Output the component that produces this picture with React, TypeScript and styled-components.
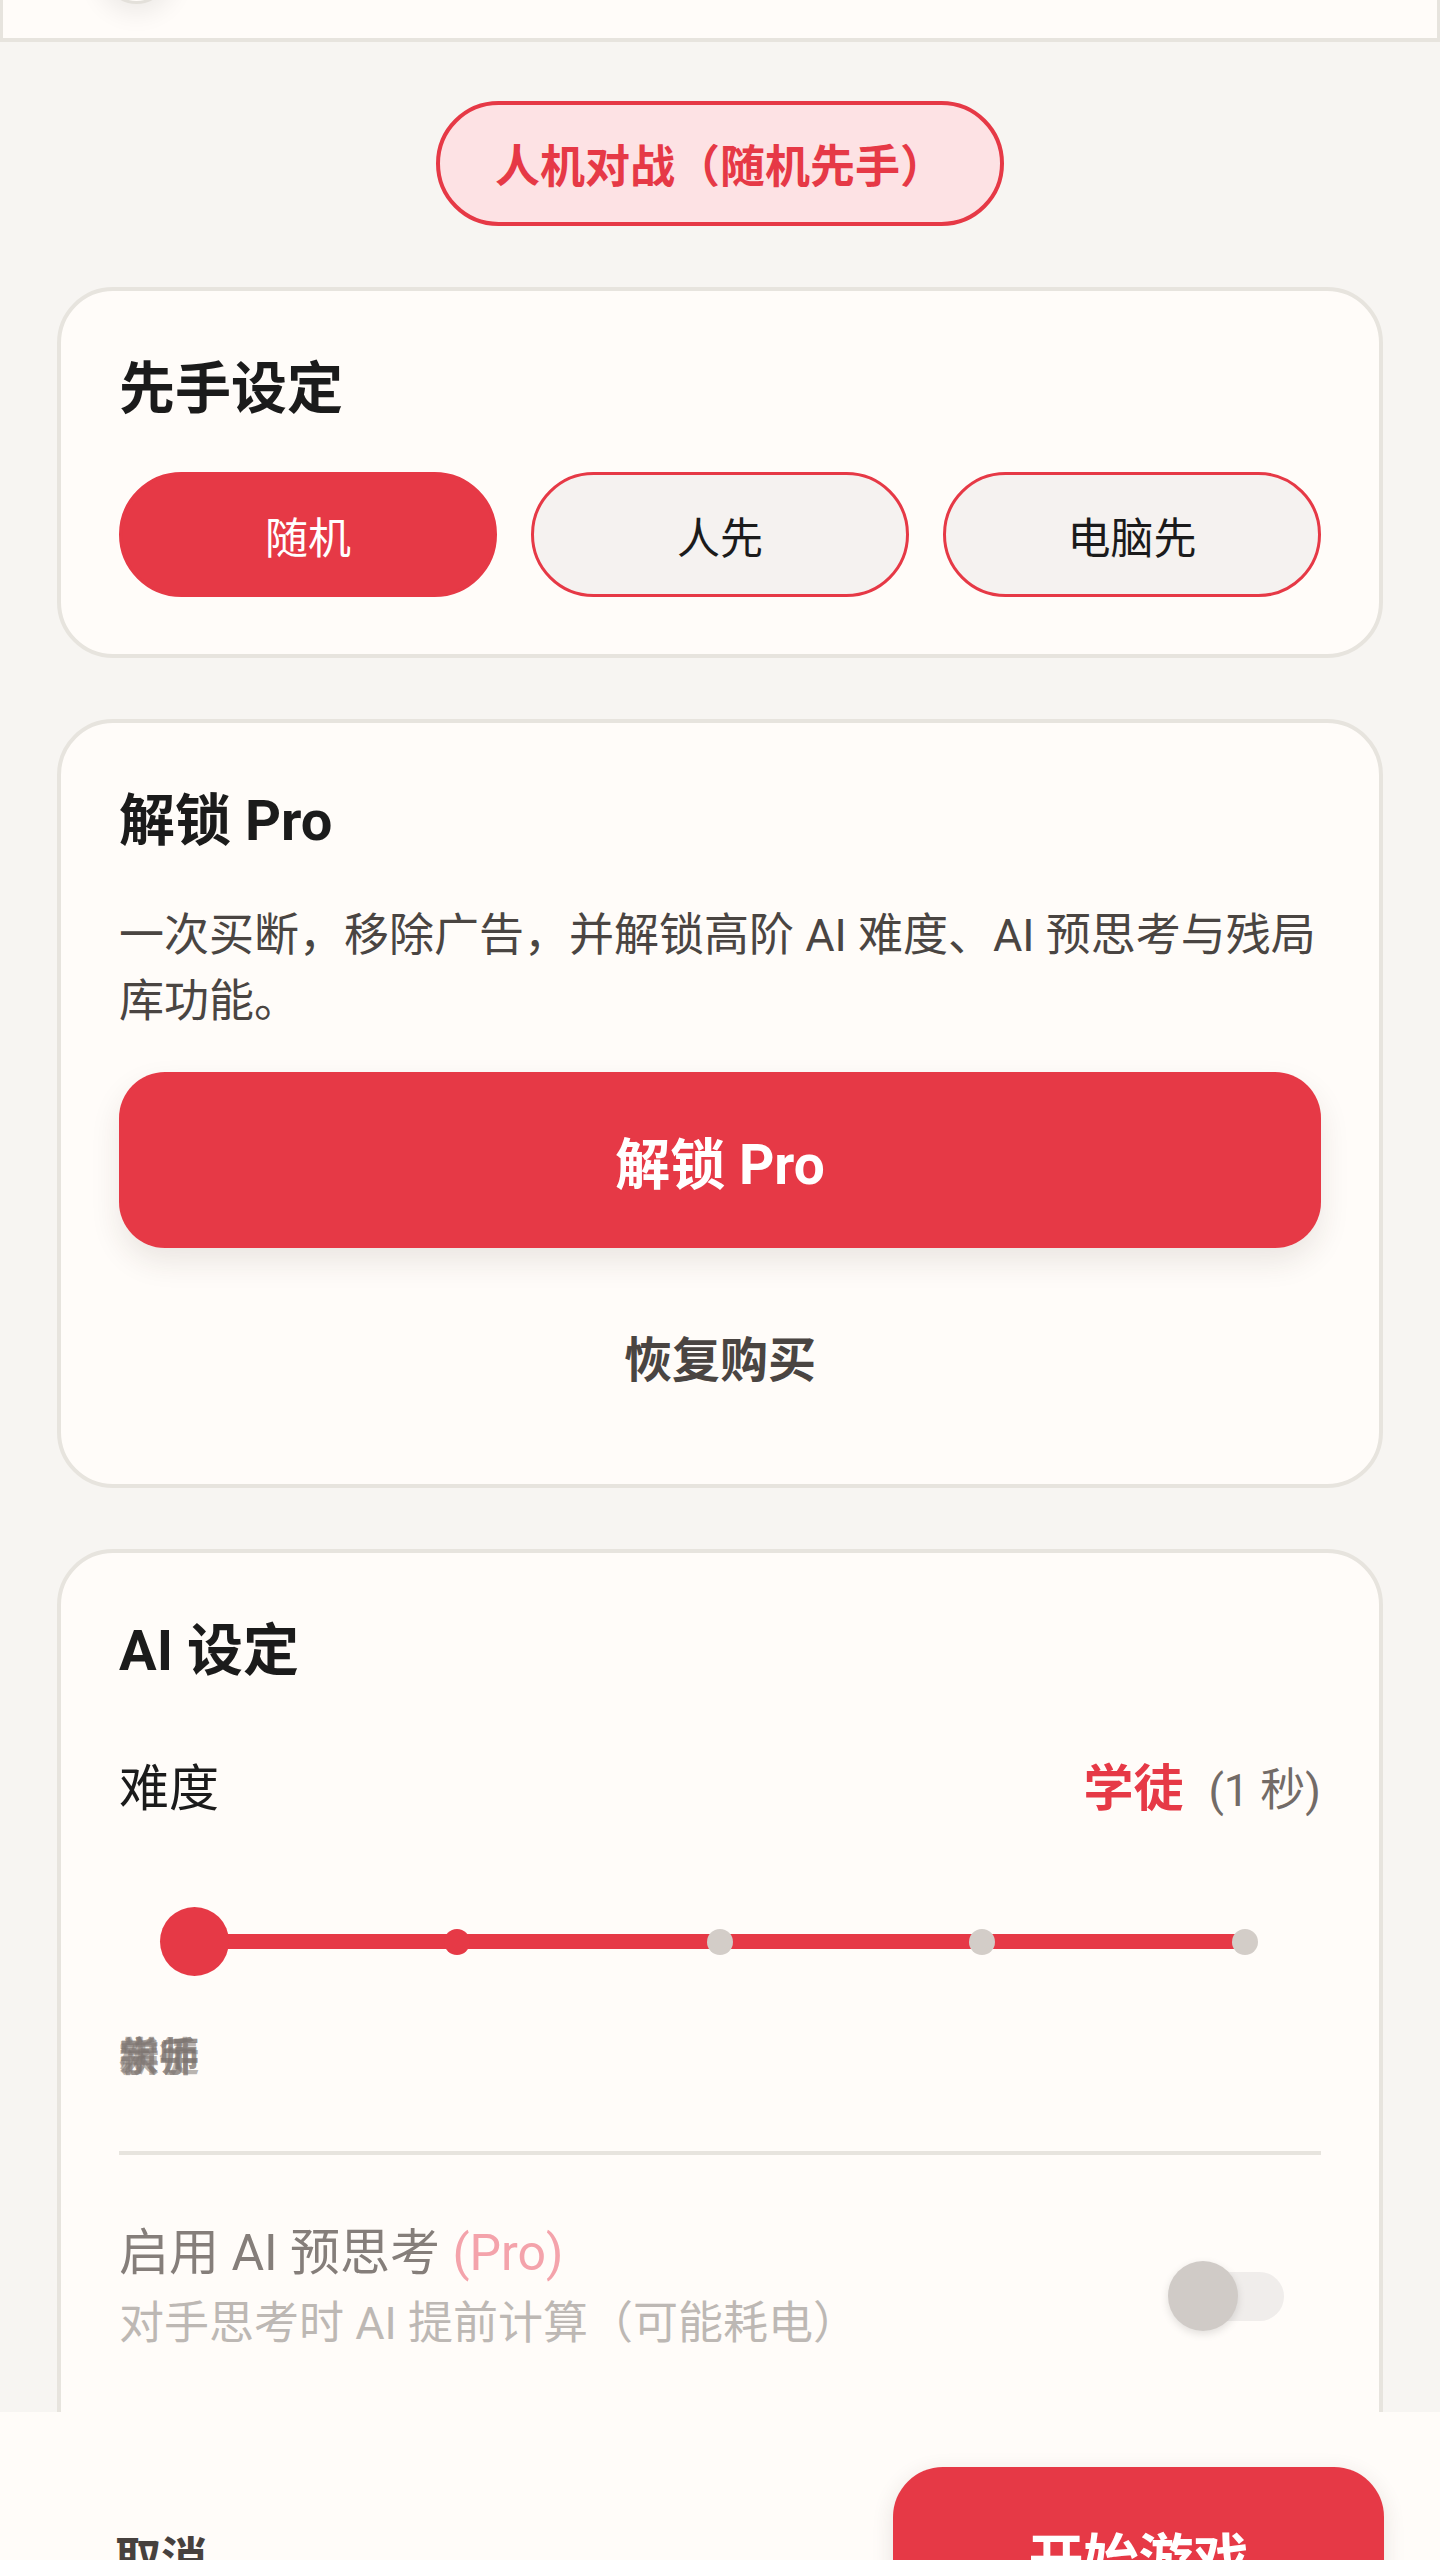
import styled, { createGlobalStyle } from "styled-components";

const RED = "#e63946";

const GlobalStyle = createGlobalStyle`
    html, body {
        margin: 0;
        padding: 0;
        background: #f7f5f2;
    }
    body {
        font-family: Roboto, "Noto Sans CJK SC", sans-serif;
    }
    * {
        box-sizing: border-box;
    }
`;

const Screen = styled.div`
    width: 1440px;
    height: 2560px;
    display: flex;
    flex-direction: column;
    overflow: hidden;
    background: #f7f5f2;
`;

const Scroll = styled.div`
    flex: 1;
    min-height: 0;
    overflow: hidden;
    display: flex;
    flex-direction: column;
`;

const TopBar = styled.div`
    height: 42px;
    flex-shrink: 0;
    background: #fffcf9;
    border: 3px solid #e7e4de;
    border-top: 0;
    border-bottom-width: 4px;
    overflow: hidden;
    display: flex;
    align-items: flex-end;
    padding-left: 100px;
`;

const Avatar = styled.div`
    width: 67px;
    height: 67px;
    flex-shrink: 0;
    border-radius: 50%;
    border: 3px solid #e3e0da;
    background: #fffcf9;
    margin-bottom: 34px;
    box-shadow: 0 4px 24px 6px rgba(0, 0, 0, 0.07);
`;

const Body = styled.div`
    display: flex;
    flex-direction: column;
    gap: 61px;
    padding: 59px 57px 0;
`;

const ModePill = styled.div`
    align-self: center;
    height: 125px;
    padding: 0 55px;
    display: flex;
    align-items: center;
    border: 4px solid ${RED};
    border-radius: 63px;
    background: #fde2e4;
    color: ${RED};
    font-size: 45px;
    font-weight: 700;
`;

const Card = styled.section<{ $bottom?: number }>`
    background: #fffcf9;
    border: 4px solid #e7e4de;
    border-radius: 56px;
    padding: 65px 58px ${(p) => p.$bottom ?? 57}px;
    display: flex;
    flex-direction: column;
    flex-shrink: 0;
`;

const SectionTitle = styled.h2`
    margin: 0;
    font-size: 56px;
    line-height: 66px;
    font-weight: 700;
    color: #1b1b1b;
`;

const OptionGrid = styled.div`
    margin-top: 50px;
    display: grid;
    grid-template-columns: repeat(3, 1fr);
    gap: 34px;
`;

const OptionButton = styled.button<{ $active?: boolean }>`
    height: 125px;
    border-radius: 63px;
    border: 3px solid ${RED};
    background: ${(p) => (p.$active ? RED : "#f5f2f0")};
    color: ${(p) => (p.$active ? "#fff" : "#1b1b1b")};
    font-family: inherit;
    font-size: 43px;
    font-weight: 400;
    padding: 0;
`;

const Description = styled.p`
    margin: 49px 0 0;
    font-size: 45px;
    line-height: 66px;
    color: #4a4542;
`;

const PrimaryButton = styled.button`
    height: 176px;
    border: 0;
    border-radius: 46px;
    background: ${RED};
    color: #fff;
    font-family: inherit;
    font-size: 55px;
    font-weight: 700;
    box-shadow: 0 14px 30px rgba(60, 40, 30, 0.1);
`;

const UnlockButton = styled(PrimaryButton)`
    margin-top: 37px;
`;

const TextButton = styled.button`
    border: 0;
    background: transparent;
    font-family: inherit;
    font-weight: 700;
    color: #4a4542;
    padding: 0;
`;

const RestoreButton = styled(TextButton)`
    margin-top: 40px;
    height: 136px;
    font-size: 48px;
`;

const DifficultyRow = styled.div`
    margin-top: 72px;
    display: flex;
    justify-content: space-between;
    align-items: baseline;
    font-size: 50px;
    line-height: 66px;
    color: #1b1b1b;
`;

const LevelName = styled.span`
    color: ${RED};
    font-weight: 700;
`;

const LevelTime = styled.span`
    margin-left: 25px;
    font-size: 45px;
    color: #736b67;
`;

const SliderArea = styled.div`
    margin-top: 83px;
    padding: 0 76px 0 75px;
`;

const Rail = styled.div`
    position: relative;
    height: 69px;
    display: flex;
    align-items: center;
`;

const TrackLine = styled.div`
    width: 100%;
    height: 15px;
    border-radius: 8px;
    background: ${RED};
`;

const Stops = styled.div`
    position: absolute;
    top: 0;
    bottom: 0;
    left: -13px;
    right: -13px;
    display: flex;
    justify-content: space-between;
    align-items: center;
`;

const Stop = styled.div`
    width: 26px;
    display: flex;
    justify-content: center;
    align-items: center;
`;

const StopDot = styled.div<{ $on?: boolean }>`
    width: 26px;
    height: 26px;
    flex-shrink: 0;
    border-radius: 50%;
    background: ${(p) => (p.$on ? RED : "#d3cdc8")};
`;

const Thumb = styled.div`
    width: 69px;
    height: 69px;
    flex-shrink: 0;
    border-radius: 50%;
    background: ${RED};
`;

const LevelLabels = styled.div`
    margin-top: 54px;
    display: grid;
    justify-items: start;
`;

const LevelLabel = styled.span`
    grid-area: 1 / 1;
    font-size: 40px;
    line-height: 56px;
    font-weight: 700;
    color: rgba(125, 117, 113, 0.55);
`;

const Divider = styled.div`
    margin-top: 65px;
    height: 4px;
    background: #e7e4de;
`;

const ToggleRow = styled.div`
    margin-top: 65px;
    display: flex;
    align-items: center;
    justify-content: space-between;
`;

const ToggleTitle = styled.div`
    font-size: 50px;
    line-height: 66px;
    color: #857e7a;
`;

const ProTag = styled.span`
    color: #f4a3ab;
`;

const ToggleHint = styled.div`
    margin-top: 8px;
    font-size: 45px;
    line-height: 60px;
    color: #bdb8b4;
`;

const Switch = styled.div`
    position: relative;
    width: 116px;
    height: 70px;
    margin: 18px 37px 0 0;
    display: flex;
    align-items: center;
`;

const SwitchTrack = styled.div`
    margin-left: 16px;
    width: 100px;
    height: 49px;
    border-radius: 25px;
    background: #f0edeb;
`;

const SwitchThumb = styled.div`
    position: absolute;
    left: 0;
    top: 0;
    width: 70px;
    height: 70px;
    border-radius: 50%;
    background: #d0cbc7;
    box-shadow: 0 3px 8px rgba(0, 0, 0, 0.12);
`;

const Footer = styled.footer`
    height: 148px;
    flex-shrink: 0;
    background: #fffcf9;
    overflow: hidden;
    display: flex;
    justify-content: space-between;
    align-items: flex-start;
    padding: 55px 56px 0 57px;
`;

const CancelButton = styled(TextButton)`
    height: 176px;
    padding: 0 58px;
    font-size: 46px;
    color: #47413e;
`;

const StartButton = styled(PrimaryButton)`
    width: 491px;
    border-radius: 50px;
    font-size: 55px;
    box-shadow: 0 6px 22px rgba(60, 40, 30, 0.12);
`;

const levels = ["学徒", "新手", "棋手", "大师", "宗师"];

export default function App() {
    return (
        <>
            <GlobalStyle />
            <Screen>
                <Scroll>
                    <TopBar>
                        <Avatar />
                    </TopBar>
                    <Body>
                        <ModePill>人机对战（随机先手）</ModePill>

                        <Card>
                            <SectionTitle>先手设定</SectionTitle>
                            <OptionGrid>
                                <OptionButton $active>随机</OptionButton>
                                <OptionButton>人先</OptionButton>
                                <OptionButton>电脑先</OptionButton>
                            </OptionGrid>
                        </Card>

                        <Card $bottom={60}>
                            <SectionTitle>解锁 Pro</SectionTitle>
                            <Description>
                                一次买断，移除广告，并解锁高阶 AI 难度、AI 预思考与残局库功能。
                            </Description>
                            <UnlockButton type="button">解锁 Pro</UnlockButton>
                            <RestoreButton type="button">恢复购买</RestoreButton>
                        </Card>

                        <Card $bottom={120}>
                            <SectionTitle>AI 设定</SectionTitle>
                            <DifficultyRow>
                                <span>难度</span>
                                <span>
                                    <LevelName>学徒</LevelName>
                                    <LevelTime>(1 秒)</LevelTime>
                                </span>
                            </DifficultyRow>
                            <SliderArea>
                                <Rail>
                                    <TrackLine />
                                    <Stops>
                                        {levels.map((name, i) => (
                                            <Stop key={name}>
                                                {i === 0 ? (
                                                    <Thumb />
                                                ) : (
                                                    <StopDot $on={i === 1} />
                                                )}
                                            </Stop>
                                        ))}
                                    </Stops>
                                </Rail>
                            </SliderArea>
                            <LevelLabels>
                                {levels.map((name) => (
                                    <LevelLabel key={name}>{name}</LevelLabel>
                                ))}
                            </LevelLabels>
                            <Divider />
                            <ToggleRow>
                                <div>
                                    <ToggleTitle>
                                        启用 AI 预思考 <ProTag>(Pro)</ProTag>
                                    </ToggleTitle>
                                    <ToggleHint>
                                        对手思考时 AI 提前计算（可能耗电）
                                    </ToggleHint>
                                </div>
                                <Switch>
                                    <SwitchTrack />
                                    <SwitchThumb />
                                </Switch>
                            </ToggleRow>
                        </Card>
                    </Body>
                </Scroll>
                <Footer>
                    <CancelButton type="button">取消</CancelButton>
                    <StartButton type="button">开始游戏</StartButton>
                </Footer>
            </Screen>
        </>
    );
}
